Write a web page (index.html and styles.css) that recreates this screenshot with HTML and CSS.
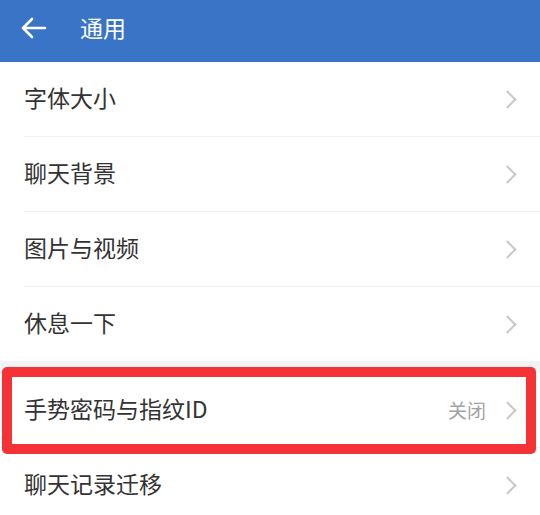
FILE: index.html
```html
<!DOCTYPE html>
<html lang="zh-CN">
<head>
    <meta charset="UTF-8">
    <meta name="viewport" content="width=device-width, initial-scale=1.0">
    <title>通用</title>
    <link rel="stylesheet" href="styles.css">
</head>
<body>
    <div class="header">
        <svg class="back" width="28" height="24" viewBox="0 0 28 24">
            <path d="M26 12H4M13 3L4 12L13 21" fill="none" stroke="#fff" stroke-width="2.6" stroke-linecap="round" stroke-linejoin="round"/>
        </svg>
        <h1>通用</h1>
    </div>

    <div class="group">
        <div class="row"><span class="label">字体大小</span><span class="arrow"></span></div>
        <div class="row"><span class="label">聊天背景</span><span class="arrow"></span></div>
        <div class="row"><span class="label">图片与视频</span><span class="arrow"></span></div>
        <div class="row"><span class="label">休息一下</span><span class="arrow"></span></div>
    </div>

    <div class="group">
        <div class="row marked">
            <span class="label">手势密码与指纹ID</span>
            <span class="value">关闭</span>
            <span class="arrow"></span>
        </div>
        <div class="row"><span class="label">聊天记录迁移</span><span class="arrow"></span></div>
    </div>
</body>
</html>
```

FILE: styles.css
```css
body {
    margin: 0;
    background-color: #f2f3f5;
    font-family: "Noto Sans CJK SC", "Noto Sans", sans-serif;
    color: #333;
}
.header {
    height: 62px;
    box-sizing: border-box;
    background-color: #3a74c6;
    display: flex;
    align-items: center;
    padding-left: 19px;
    padding-bottom: 7px;
    color: white;
}
.back {
    display: block;
}
.header h1 {
    margin: 0 0 0 33px;
    font-size: 23px;
    font-weight: normal;
    line-height: 1;
}
.group {
    background-color: white;
    padding-left: 24px;
    margin-bottom: 12px;
}
.row {
    height: 74px;
    display: flex;
    align-items: center;
    padding-right: 22px;
    border-bottom: 1px solid #efefef;
    position: relative;
}
.group .row:last-child {
    border-bottom: none;
}
.label {
    flex: 1;
    font-size: 23px;
    line-height: 1;
    color: #333;
    padding-bottom: 3px;
}
.value {
    font-size: 19px;
    color: #a3a3a3;
    margin-right: 15px;
    padding-bottom: 2px;
}
.arrow {
    width: 11px;
    height: 11px;
    border-top: 2px solid #c9c9c9;
    border-right: 2px solid #c9c9c9;
    transform: rotate(45deg);
    margin-right: 4px;
}
.marked::after {
    content: "";
    position: absolute;
    left: -22px;
    right: 4px;
    top: -6px;
    bottom: -7px;
    border: 10px solid #f53337;
    border-radius: 5px;
}
```
